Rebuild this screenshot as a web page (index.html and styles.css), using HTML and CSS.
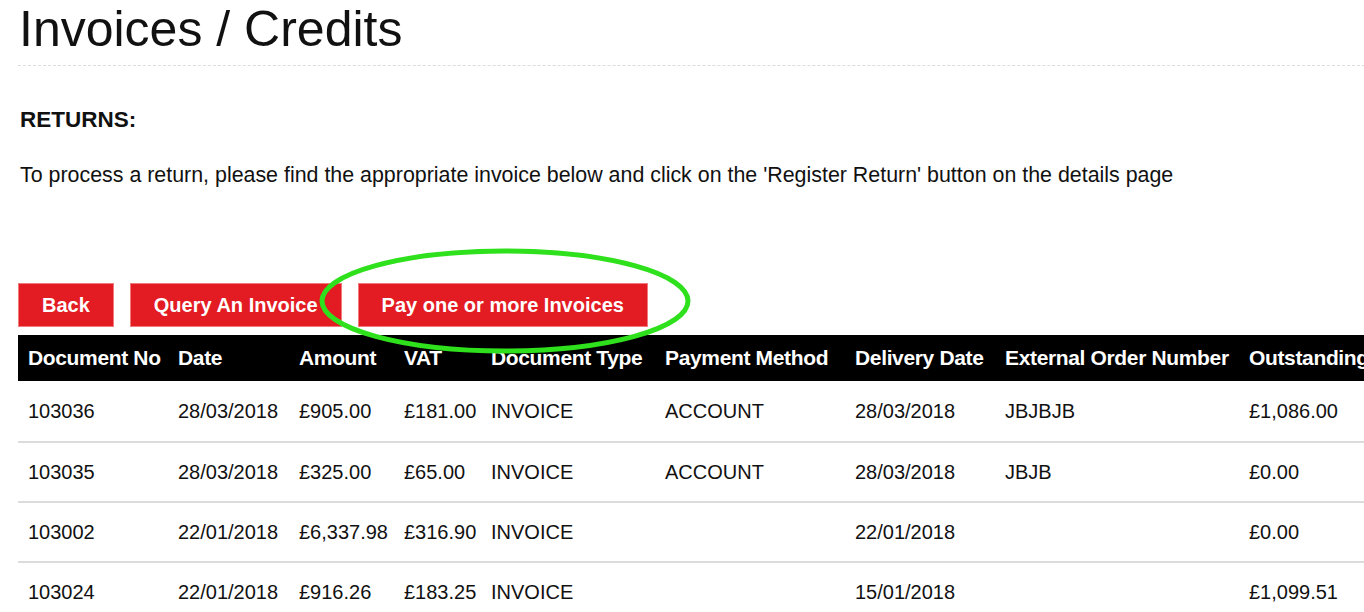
FILE: index.html
```html
<!DOCTYPE html>
<html>
<head>
<meta charset="utf-8">
<link rel="stylesheet" href="styles.css">
</head>
<body>
<div class="page">
  <h1 class="title">Invoices / Credits</h1>
  <h2 class="subtitle">RETURNS:</h2>
  <p class="intro">To process a return, please find the appropriate invoice below and click on the 'Register Return' button on the details page</p>
  <div class="actions">
    <button class="btn">Back</button>
    <button class="btn">Query An Invoice</button>
    <button class="btn">Pay one or more Invoices</button>
    <svg class="highlight" width="380" height="112" viewBox="0 0 380 112"><ellipse cx="190" cy="56" rx="183" ry="50" fill="none" stroke="#2fe01c" stroke-width="5"/></svg>
  </div>
  <table class="grid">
    <colgroup>
      <col class="c1"><col class="c2"><col class="c3"><col class="c4"><col class="c5"><col class="c6"><col class="c7"><col class="c8"><col class="c9">
    </colgroup>
    <thead>
      <tr><th>Document No</th><th>Date</th><th>Amount</th><th>VAT</th><th>Document Type</th><th>Payment Method</th><th>Delivery Date</th><th>External Order Number</th><th>Outstanding</th></tr>
    </thead>
    <tbody>
      <tr class="first"><td>103036</td><td>28/03/2018</td><td>£905.00</td><td>£181.00</td><td>INVOICE</td><td>ACCOUNT</td><td>28/03/2018</td><td>JBJBJB</td><td>£1,086.00</td></tr>
      <tr><td>103035</td><td>28/03/2018</td><td>£325.00</td><td>£65.00</td><td>INVOICE</td><td>ACCOUNT</td><td>28/03/2018</td><td>JBJB</td><td>£0.00</td></tr>
      <tr><td>103002</td><td>22/01/2018</td><td>£6,337.98</td><td>£316.90</td><td>INVOICE</td><td></td><td>22/01/2018</td><td></td><td>£0.00</td></tr>
      <tr><td>103024</td><td>22/01/2018</td><td>£916.26</td><td>£183.25</td><td>INVOICE</td><td></td><td>15/01/2018</td><td></td><td>£1,099.51</td></tr>
    </tbody>
  </table>
</div>
</body>
</html>
```
FILE: styles.css
```css
html, body {
  margin: 0;
  padding: 0;
  background: #fff;
  overflow: hidden;
}
body {
  font-family: "Liberation Sans", Arial, sans-serif;
  color: #111;
}
.page {
  padding: 0 0 0 18px;
  width: 1600px;
}
.title {
  margin: 0;
  padding: 3px 0 0 1px;
  font-size: 50px;
  font-weight: normal;
  line-height: 52px;
  height: 62px;
  border-bottom: 1px dashed #dcdcdc;
  width: 1346px;
}
.subtitle {
  margin: 41px 0 0 2px;
  font-size: 22.5px;
  font-weight: bold;
  line-height: 26px;
}
.intro {
  margin: 29px 0 0 2px;
  font-size: 21.4px;
  line-height: 26px;
}
.actions {
  position: relative;
  display: flex;
  gap: 16px;
  margin-top: 95px;
  height: 44px;
}
.btn {
  font-family: "Liberation Sans", Arial, sans-serif;
  font-weight: bold;
  font-size: 20px;
  color: #fff;
  background: #e31b23;
  border: 1px solid #f07a7e;
  height: 44px;
  padding: 0 23px;
  margin: 0;
}
.highlight {
  position: absolute;
  left: 297px;
  top: -38px;
}
.grid {
  border-collapse: collapse;
  table-layout: fixed;
  margin-top: 8px;
  width: 1400px;
}
.c1 { width: 150px; }
.c2 { width: 121px; }
.c3 { width: 105px; }
.c4 { width: 87px; }
.c5 { width: 174px; }
.c6 { width: 190px; }
.c7 { width: 150px; }
.c8 { width: 244px; }
.c9 { width: 179px; }
.grid th {
  background: #000;
  color: #fff;
  text-align: left;
  font-size: 21px;
  font-weight: bold;
  letter-spacing: -0.35px;
  height: 46px;
  padding: 0 0 0 10px;
  white-space: nowrap;
}
.grid td {
  font-size: 20px;
  height: 58px;
  padding: 0 0 0 10px;
  border-bottom: 2px solid #dcdcdc;
  white-space: nowrap;
  color: #111;
}
.grid .first td {
  height: 60px;
}
```
